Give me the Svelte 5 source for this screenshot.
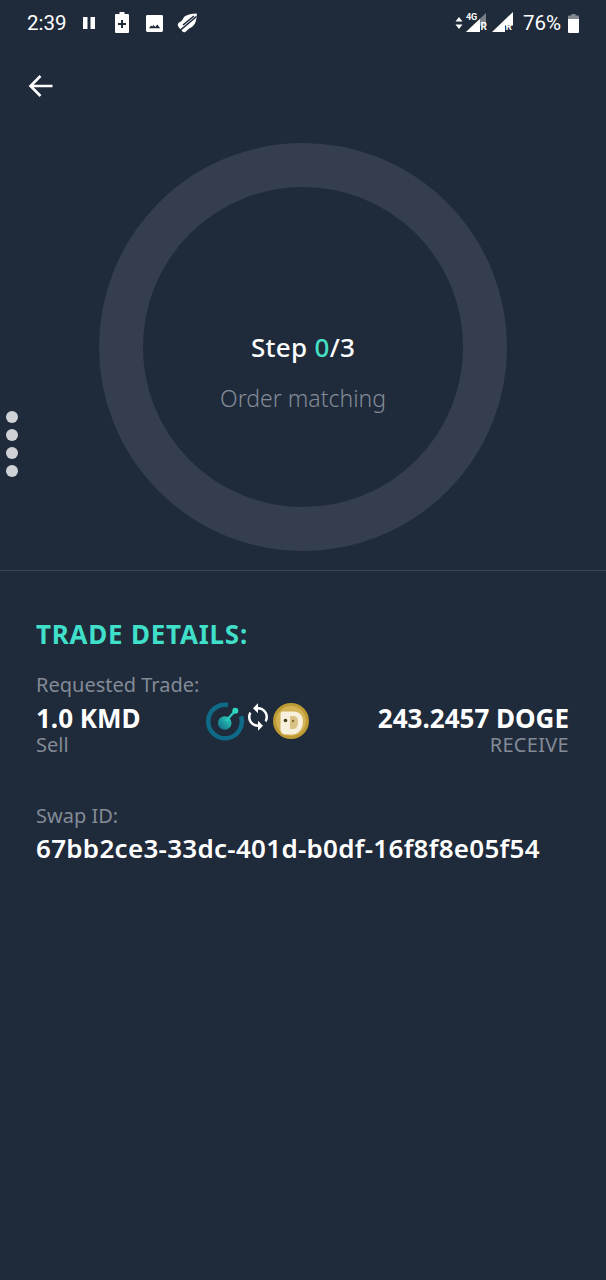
<script>
  const sideDots = [0, 1, 2, 3];
</script>

<div class="page">
  <header class="status">
    <div class="status-left">
      <span class="time">2:39</span>
      <svg class="pause" width="12" height="14" viewBox="0 0 12 14"><path d="M0 1h4.500v12H0zM7.500 1H12v12H7.500z" fill="#fff"/></svg>
      <svg class="charge" width="14" height="21" viewBox="0 0 14 21"><path fill-rule="evenodd" d="M4.500 0h5v2H13a1 1 0 0 1 1 1v17a1 1 0 0 1-1 1H1a1 1 0 0 1-1-1V3a1 1 0 0 1 1-1h3.500zM6 8v3H3v2h3v3h2v-3h3v-2H8V8z" fill="#fff"/></svg>
      <svg class="image" width="17" height="17" viewBox="0 0 18 18"><path fill-rule="evenodd" d="M1.500 0h15A1.500 1.500 0 0 1 18 1.500v15a1.500 1.500 0 0 1-1.500 1.500h-15A1.500 1.500 0 0 1 0 16.500v-15A1.500 1.500 0 0 1 1.500 0zM3 14h12l-3-4-2.200 2.600L8 10.500 6.500 12.300 5.500 11z" fill="#fff"/></svg>
      <svg class="muted-leaf" width="20" height="20" viewBox="0 0 20 20"><path d="M7.500 3.500C10.500 1.500 15 .8 19.800.5 19.800 5.500 19 10.500 15.500 13.500 13.800 15 11.500 15.500 10 17.500 8.500 19.500 6.500 19.800 5.500 18.500 4 16.500 2 15 1 13 .2 11 1.500 9.500 3 9 5 8.300 6 5.500 7.500 3.500z" fill="#fff"/><path d="M.5 19.500 19.500 3.500M6 12 17 3" stroke="#1f2a3a" stroke-width="1.600" fill="none"/></svg>
    </div>
    <div class="status-right">
      <svg class="updown" width="8" height="14" viewBox="0 0 8 14"><path d="M4 1l3.500 4.500h-7zM4 13 .5 8.500h7z" fill="#fff"/></svg>
      <div class="signal">
        <svg width="28" height="24" viewBox="0 0 28 24"><path d="M20 2v19H0z" fill="#fff" fill-opacity=".4"/><path d="M10 11.500V21H0z" fill="#fff"/><path d="M10 11.500 14 8v13h-4z" fill="#fff"/><rect x="14" y="14.500" width="9" height="9.500" fill="#1f2a3a"/></svg>
        <span class="net">4G</span>
        <span class="roam">R</span>
      </div>
      <div class="signal second">
        <svg width="24" height="24" viewBox="0 0 24 24"><path d="M21 1v20H0z" fill="#fff"/><rect x="13" y="14.500" width="9" height="9.500" fill="#1f2a3a"/></svg>
        <span class="roam">R</span>
      </div>
      <span class="pct">76%</span>
      <svg class="battery" width="11" height="19" viewBox="0 0 11 19"><path d="M3.500 0h4v1.500H10a1 1 0 0 1 1 1V5H0V2.500a1 1 0 0 1 1-1h2.500z" fill="#fff" fill-opacity=".45"/><path d="M0 5h11v13a1 1 0 0 1-1 1H1a1 1 0 0 1-1-1z" fill="#fff"/></svg>
    </div>
  </header>

  <button class="back" aria-label="Back">
    <svg width="26" height="24" viewBox="0 0 26 24"><path d="M24.500 12H3M12.500 2 2.500 12l10 10" stroke="#fff" stroke-width="2.600" fill="none"/></svg>
  </button>

  <section class="progress">
    <div class="ring">
      <div class="step">Step <span class="accent">0</span>/3</div>
      <div class="phase">Order matching</div>
    </div>
  </section>

  <section class="details">
    <h2>TRADE DETAILS:</h2>
    <div class="label first">Requested Trade:</div>
    <div class="trade">
      <div class="side">
        <div class="amount">1.0 KMD</div>
        <div class="label">Sell</div>
      </div>
      <div class="coins">
        <svg width="40" height="40" viewBox="0 0 40 40">
          <defs><linearGradient id="kmd" x1="0" y1="1" x2="1" y2="0"><stop offset="0" stop-color="#0f6785"/><stop offset="1" stop-color="#2fd6c0"/></linearGradient></defs>
          <path d="M23 3.960A16.800 16.800 0 1 0 36 15.300" stroke="#0f6a88" stroke-width="4.500" fill="none"/>
          <circle cx="19.700" cy="22" r="6.800" fill="url(#kmd)"/>
          <path d="M21 20 29.500 10.500" stroke="#2bc9bc" stroke-width="2.400"/>
          <circle cx="30.300" cy="9.700" r="3" fill="#2fd6c0"/>
        </svg>
        <svg class="swap" width="30" height="30" viewBox="0 0 24 24"><path d="M12 4V1L8 5l4 4V6c3.310 0 6 2.690 6 6 0 1.010-.25 1.970-.7 2.800l1.460 1.460C19.540 15.030 20 13.570 20 12c0-4.420-3.580-8-8-8zm0 14c-3.310 0-6-2.690-6-6 0-1.010.25-1.970.7-2.800L5.240 7.740C4.460 8.970 4 10.430 4 12c0 4.420 3.580 8 8 8v3l4-4-4-4v3z" fill="#fff"/></svg>
        <svg width="36" height="36" viewBox="0 0 36 36">
          <circle cx="18" cy="18" r="18" fill="#bd9a33"/>
          <circle cx="18" cy="18" r="15" fill="#d2b254"/>
          <path d="M9.500 8.500H20C27 8.500 30 13 30 18.500S27 31 20 31.500H12C9 31.500 7.500 29 7.500 26V11C7.500 9.500 8.500 8.500 9.500 8.500z" fill="#f6f0dc"/>
          <path d="M17 13h3.500C23.500 13 25 15.500 25 19s-1.500 7-4.500 7H17z" fill="#d9c286"/>
          <circle cx="12.500" cy="17.500" r="1.800" fill="#4a3a1a"/>
          <circle cx="20" cy="18" r="1.200" fill="#8a6d2c"/>
        </svg>
      </div>
      <div class="side right">
        <div class="amount">243.2457 DOGE</div>
        <div class="label wide">RECEIVE</div>
      </div>
    </div>

    <div class="label swap-label">Swap ID:</div>
    <div class="swap-id">67bb2ce3-33dc-401d-b0df-16f8f8e05f54</div>
  </section>

  <div class="side-dots">
    {#each sideDots as d (d)}
      <span class="dot"></span>
    {/each}
  </div>
</div>

<style>
  :global(body) {
    margin: 0;
    background: #1f2a3a;
  }

  .page {
    position: relative;
    width: 606px;
    height: 1280px;
    overflow: hidden;
    background: #1f2a3a;
    color: #fff;
    font-family: "Noto Sans", "Open Sans", sans-serif;
  }

  .status {
    height: 46px;
    display: flex;
    justify-content: space-between;
    align-items: center;
    padding: 0 27px;
    box-sizing: border-box;
  }

  .status-left,
  .status-right {
    display: flex;
    align-items: center;
  }

  .time,
  .pct {
    font-family: Roboto, sans-serif;
    font-size: 20.500px;
    color: #fff;
  }

  .pause { margin-left: 16px; }
  .charge { margin-left: 20px; margin-top: -1px; }
  .image { margin-left: 17px; }
  .muted-leaf { margin-left: 14px; }

  .signal {
    position: relative;
    width: 28px;
    height: 24px;
    margin-left: 3px;
  }

  .signal svg { display: block; }

  .signal.second {
    width: 24px;
    margin-left: -2px;
  }

  .net {
    position: absolute;
    left: 0;
    top: 1px;
    font: 700 9px/10px Roboto, sans-serif;
  }

  .roam {
    position: absolute;
    right: 7px;
    bottom: 3px;
    font: 700 10px/10px Roboto, sans-serif;
  }

  .second .roam { right: 4px; }

  .pct { margin-left: 7px; }
  .battery { margin-left: 7px; }

  .back {
    display: block;
    margin: 28px 0 0 28px;
    padding: 0;
    width: 26px;
    height: 24px;
    background: none;
    border: 0;
  }

  .back svg { display: block; }

  .progress {
    margin-top: 45px;
    height: 427px;
    border-bottom: 1px solid #3a4454;
    display: flex;
    justify-content: center;
    align-items: flex-start;
  }

  .ring {
    width: 408px;
    height: 408px;
    box-sizing: border-box;
    border: 44px solid #343e4e;
    border-radius: 50%;
    display: flex;
    flex-direction: column;
    align-items: center;
  }

  .step {
    margin-top: 142px;
    font-size: 26px;
    line-height: 36px;
    font-weight: 500;
    letter-spacing: 0.3px;
    color: #fff;
  }

  .accent { color: #45e0c8; }

  .phase {
    margin-top: 18px;
    font-size: 23px;
    line-height: 30px;
    font-weight: 300;
    color: #838b97;
  }

  .details {
    padding: 47px 37px 0 36px;
  }

  h2 {
    margin: 0;
    font-size: 26px;
    line-height: 32px;
    font-weight: 700;
    letter-spacing: 0.75px;
    color: #3fdfc9;
  }

  .label {
    font-size: 20px;
    line-height: 26px;
    color: #838b97;
  }

  .first { margin-top: 22px; }
  .wide { letter-spacing: 0.3px; }

  .trade {
    display: grid;
    grid-template-columns: 169px auto 1fr;
    align-items: start;
  }

  .amount {
    margin-top: 6px;
    font-size: 26px;
    line-height: 28px;
    font-weight: 700;
    color: #fff;
    white-space: nowrap;
  }

  .right { text-align: right; }

  .coins {
    display: flex;
    align-items: center;
    margin-top: 3px;
  }

  .swap { margin: -8px 0 0 -2px; }

  .swap-label { margin-top: 45px; }

  .swap-id {
    margin-top: 2px;
    font-size: 26px;
    line-height: 34px;
    font-weight: 600;
    letter-spacing: 0.28px;
    color: #fff;
    white-space: nowrap;
  }

  .side-dots {
    position: absolute;
    left: 6px;
    top: 411px;
    display: flex;
    flex-direction: column;
    gap: 6px;
  }

  .dot {
    width: 12px;
    height: 12px;
    border-radius: 50%;
    background: #cfd2d6;
  }
</style>
